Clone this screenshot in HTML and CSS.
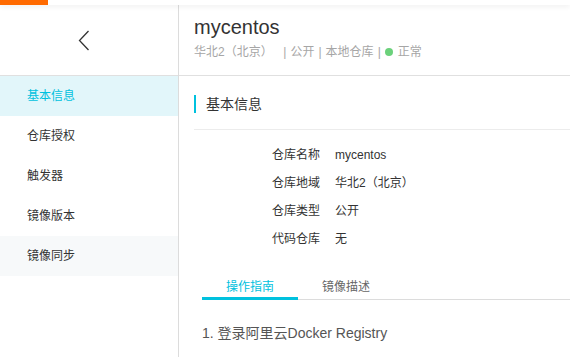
FILE: index.html
```html
<!DOCTYPE html>
<html lang="zh-CN">
  <head>
    <meta charset="UTF-8" />
    <meta name="viewport" content="width=device-width, initial-scale=1.0" />
    <title>mycentos</title>
    <link rel="stylesheet" href="styles.css">
  </head>
  <body>
    <div class="topbar">
      <div class="brand"></div>
    </div>
    <div class="layout">
      <div class="sidebar">
        <div class="sidebar-head">
          <svg class="back" width="12" height="22" viewBox="0 0 12 22">
            <polyline points="10.5,1 1.5,10.5 10.5,20" fill="none" stroke="#333" stroke-width="1.3" />
          </svg>
        </div>
        <div class="nav-item active">基本信息</div>
        <div class="nav-item">仓库授权</div>
        <div class="nav-item">触发器</div>
        <div class="nav-item">镜像版本</div>
        <div class="nav-item hover">镜像同步</div>
      </div>
      <div class="main">
        <div class="main-head">
          <div class="title">mycentos</div>
          <div class="meta">
            华北2（北京）&nbsp;&nbsp;<span class="sep">|</span>公开<span class="sep">|</span>本地仓库<span class="sep">|</span><span class="dot"></span>正常
          </div>
        </div>
        <div class="section-title">基本信息</div>
        <div class="info">
          <div class="row"><span class="label">仓库名称</span><span class="value">mycentos</span></div>
          <div class="row"><span class="label">仓库地域</span><span class="value">华北2（北京）</span></div>
          <div class="row"><span class="label">仓库类型</span><span class="value">公开</span></div>
          <div class="row"><span class="label">代码仓库</span><span class="value">无</span></div>
        </div>
        <div class="tabs">
          <div class="tab active">操作指南</div>
          <div class="tab">镜像描述</div>
        </div>
        <div class="step">1. 登录阿里云Docker Registry</div>
      </div>
    </div>
  </body>
</html>
```

FILE: styles.css
```css
* {
  box-sizing: border-box;
}
body {
  margin: 0;
  padding: 0;
  background: #fff;
  color: #333;
  font-family: "Liberation Sans", Arial, "Noto Sans CJK SC", sans-serif;
  font-size: 12px;
  height: 357px;
  overflow: hidden;
}
.topbar {
  position: relative;
  z-index: 1;
  height: 5px;
  background: #fff;
  box-shadow: 0 2px 5px rgba(0, 0, 0, 0.06);
}
.brand {
  width: 48px;
  height: 5px;
  background: #ff6a00;
}
.layout {
  display: flex;
  height: 352px;
}
.sidebar {
  width: 179px;
  flex-shrink: 0;
  border-right: 1px solid #dcdcdc;
}
.sidebar-head {
  height: 71px;
  border-bottom: 1px solid #e0e0e0;
  display: flex;
  align-items: center;
  padding-left: 78px;
  padding-top: 1px;
}
.nav-item {
  height: 40px;
  line-height: 40px;
  padding-left: 27px;
  font-size: 12px;
  color: #333;
}
.nav-item.active {
  background: #e2f6fa;
  color: #00c1de;
}
.nav-item.hover {
  background: #f7f9fa;
}
.main {
  flex: 1;
  padding-left: 15px;
}
.main-head {
  height: 71px;
  border-bottom: 1px solid #e0e0e0;
  margin-left: -15px;
  padding-left: 15px;
  padding-top: 10px;
}
.title {
  font-size: 20px;
  line-height: 24px;
  color: #333;
}
.meta {
  margin-top: 5px;
  font-size: 12px;
  line-height: 16px;
  color: #a6a6a6;
  display: flex;
  align-items: center;
}
.sep {
  margin: 0 4px;
}
.dot {
  width: 8px;
  height: 8px;
  border-radius: 50%;
  background: #6bd17b;
  margin-right: 5px;
}
.section-title {
  margin-top: 19px;
  height: 18px;
  line-height: 18px;
  font-size: 14px;
  border-left: 2px solid #00c1de;
  padding-left: 10px;
  color: #333;
}
.info {
  border-top: 1px solid #ececec;
  margin-top: 16px;
  padding-top: 11px;
}
.row {
  display: flex;
  height: 28px;
  line-height: 28px;
  font-size: 12px;
}
.label {
  width: 126px;
  text-align: right;
  color: #333;
}
.value {
  margin-left: 15px;
  color: #333;
}
.tabs {
  display: flex;
  margin-top: 25px;
  margin-left: 8px;
  border-bottom: 1px solid #dcdcdc;
}
.tab {
  padding: 0 24px 1px;
  line-height: 18px;
  font-size: 12px;
  color: #666;
  border-bottom: 3px solid transparent;
  margin-bottom: -1px;
}
.tab.active {
  color: #00c1de;
  border-bottom-color: #00c1de;
}
.step {
  margin-top: 24px;
  margin-left: 8px;
  font-size: 14px;
  line-height: 18px;
  color: #555;
}
```
